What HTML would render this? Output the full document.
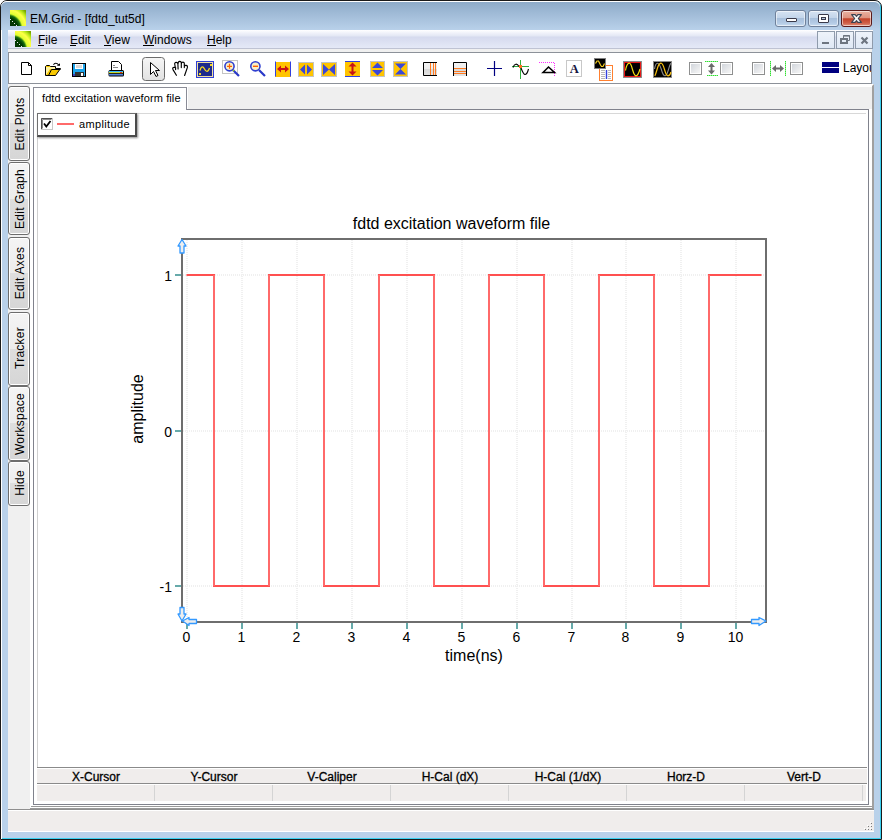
<!DOCTYPE html>
<html><head><meta charset="utf-8">
<style>
*{margin:0;padding:0;box-sizing:border-box}
html,body{width:882px;height:840px;overflow:hidden;background:#fff}
body{position:relative;font-family:"Liberation Sans",sans-serif;color:#000}
.a{position:absolute}
#win{left:0;top:0;width:882px;height:840px;background:#b9d1ea;border:1px solid #1a1a1a;border-radius:7px 7px 0 0;box-shadow:inset 1px 0 0 #fff,inset -1px -1px 0 #3ad0f0}
#title{left:1px;top:1px;width:879px;height:29px;border-top:1px solid #fff;background:linear-gradient(#8eabc9,#b9d1ea);border-radius:6px 6px 0 0}
#ttext{left:30px;top:12px;font-size:12px;line-height:14px;color:#000;white-space:nowrap}
#menubar{left:8px;top:30px;width:865px;height:19px;background:linear-gradient(#fff 0px,#f0f2fa 3px,#e3e7f4 6px,#d5daee 7px,#e5e9f7 18px);border-bottom:1px solid #bfc3d3}
.mi{top:33px;font-size:12px;line-height:14px;white-space:nowrap}
#client{left:8px;top:49px;width:864px;height:783px;background:#f0f0f0}
#toolbar{left:8px;top:52px;width:864px;height:32px;background:#fff;border:1px solid #8c9199}
.vt{left:8px;width:22px;border:1px solid #6d6d6d;border-radius:3px;box-shadow:inset 0 0 0 1px #fff;background:linear-gradient(#f4f4f4 0%,#ececec 50%,#dedede 50%,#d6d6d6 100%)}
.vtt{position:absolute;left:50%;top:50%;margin-left:1px;letter-spacing:0.25px;transform:translate(-50%,-50%) rotate(-90deg);font-size:12px;line-height:14px;white-space:nowrap;color:#000}
#doctab{left:33px;top:87px;width:154px;height:23px;background:#fff;border:1px solid #8a8c96;border-bottom:none}
#frame{left:33px;top:109px;width:836px;height:696px;background:#fff;border:1px solid #80828c}
#plotarea{left:37px;top:113px;width:829px;height:654px;border-top:1px solid #d8d8d8;border-left:1px solid #d0d0d0;background:#fff}
#status{left:8px;top:809px;width:866px;height:23px;background:#f0edec;border-top:1px solid #8f8f8f;box-shadow:inset 0 1px 0 #fff;border-bottom:1px solid #fff}
#mdi{left:30px;top:84px;width:844px;height:725px;border-top:2px solid transparent;background-clip:padding-box;background:#fff;border-right:2px solid #a0a0a0;border-bottom:1px solid #999}
#tabstrip{left:188px;top:87px;width:684px;height:22px;background:#efefef}
#mdiline{left:31px;top:806px;width:841px;height:1px;background:#9a9a9a}

#legend{left:37px;top:113px;width:100px;height:24px;background:#fff;border-top:1px solid #707070;border-left:1px solid #707070;border-right:2px solid #4a4a4a;border-bottom:2px solid #4a4a4a;box-shadow:1px 1px 2px rgba(0,0,0,.45)}
#thead{left:37px;top:767px;width:830px;height:18px;background:#f0edec;border-top:1px solid #8a8a8a;border-bottom:1px solid #fff;box-shadow:inset 0 1px 0 #fff,inset 0 -1px 0 #fff}
#thline{left:37px;top:783px;width:830px;height:1px;background:#8a8a8a}
#trow{left:37px;top:785px;width:829px;height:16px;background:#f0edec}
.hdr{top:770px;font-size:12px;line-height:14px;letter-spacing:0px;font-weight:normal;-webkit-text-stroke:0.3px #000;white-space:nowrap}


.tbtn{top:10px;width:31px;height:17px;border:1px solid #6f819b;border-radius:3px;box-shadow:inset 0 0 0 1px rgba(255,255,255,.55);background:linear-gradient(#d6e3f2 0%,#c3d5ea 45%,#a8c0dc 50%,#b4cbe5 80%,#c8dbef 100%)}
.cls{border-color:#5a1a1a;background:linear-gradient(#eab2a2 0%,#de9380 45%,#c3432a 52%,#cf6048 80%,#e0937c 100%)}
.mbtn{top:31px;width:18px;height:18px;border:1px solid #8f9bab;background:linear-gradient(#eef3fa,#dfe8f5)}
u{text-decoration:none;border-bottom:1px solid #000}
</style></head><body>
<div id="win" class="a"></div>
<div id="title" class="a"></div>
<div id="ttext" class="a">EM.Grid - [fdtd_tut5d]</div>
<div id="menubar" class="a"></div>
<div class="a mi" style="left:38px">File</div>
<div class="a mi" style="left:70px">Edit</div>
<div class="a mi" style="left:104px">View</div>
<div class="a mi" style="left:143px">Windows</div>
<div class="a mi" style="left:207px">Help</div>
<div class="a" style="left:38px;top:45px;width:6px;height:1px;background:#000"></div>
<div class="a" style="left:70px;top:45px;width:6px;height:1px;background:#000"></div>
<div class="a" style="left:104px;top:45px;width:7px;height:1px;background:#000"></div>
<div class="a" style="left:143px;top:45px;width:11px;height:1px;background:#000"></div>
<div class="a" style="left:207px;top:45px;width:9px;height:1px;background:#000"></div>


<svg width="0" height="0" style="position:absolute"><defs>
<radialGradient id="ico" cx="-2" cy="18" r="24" gradientUnits="userSpaceOnUse">
<stop offset="0" stop-color="#0a300a"/><stop offset="0.42" stop-color="#003c00"/><stop offset="0.52" stop-color="#1a7010"/>
<stop offset="0.6" stop-color="#e0ff30"/><stop offset="0.76" stop-color="#ffff48"/><stop offset="0.88" stop-color="#b8e818"/><stop offset="1" stop-color="#78a800"/>
</radialGradient></defs></svg>
<svg class="a" style="left:10px;top:10px" width="16" height="16"><rect width="16" height="16" fill="url(#ico)"/><path d="M0,9 L1,10 M2,11 L3,12 M4,13 L5,14 M6,15 L7,16" stroke="#e8e8e8" stroke-width="1"/></svg>
<svg class="a" style="left:15px;top:31px" width="16" height="16"><rect width="16" height="16" fill="url(#ico)"/><path d="M0,9 L1,10 M2,11 L3,12 M4,13 L5,14 M6,15 L7,16" stroke="#e8e8e8" stroke-width="1"/></svg>
<div class="a tbtn" style="left:775px"><div class="a" style="left:10px;top:7px;width:11px;height:4px;background:#fff;border:1px solid #3a3a4a;border-radius:1px"></div></div>
<div class="a tbtn" style="left:808px"><div class="a" style="left:9px;top:3px;width:11px;height:9px;background:#fff;border:1px solid #3a3a4a;border-radius:1px"><div class="a" style="left:2px;top:2px;width:5px;height:3px;background:#b8c8dc;border:1px solid #3a3a4a"></div></div></div>
<div class="a tbtn cls" style="left:841px"><svg class="a" style="left:0;top:0" width="31" height="17"><path d="M9.6,3.6 H13.2 L14.5,5.4 L15.8,3.6 H19.4 L16.3,7.5 L19.4,11.4 H15.8 L14.5,9.6 L13.2,11.4 H9.6 L12.7,7.5 Z" fill="#f6f6f6" stroke="#3c4250" stroke-width="1.1" stroke-linejoin="round"/></svg></div>
<div class="a mbtn" style="left:817px"><div class="a" style="left:4px;top:10px;width:7px;height:2px;background:#6d7580"></div></div>
<div class="a mbtn" style="left:836px"><svg class="a" style="left:0;top:0" width="18" height="18"><path d="M6.5,6.5 V3.5 H12.5 V8.5 H10.5" fill="none" stroke="#6d7580" stroke-width="1"/><path d="M6.5,3.8 H12.5" stroke="#6d7580" stroke-width="1.6"/><rect x="4" y="7" width="6" height="4" fill="none" stroke="#6d7580" stroke-width="2"/></svg></div>
<div class="a mbtn" style="left:855px"><svg class="a" style="left:0;top:0" width="18" height="18"><path d="M5.5,5.5 L11.5,11.5 M11.5,5.5 L5.5,11.5" stroke="#6d7580" stroke-width="2.2"/></svg></div>
<div id="client" class="a"></div>
<div id="toolbar" class="a"></div>
<!--TB-->
<svg class="a" style="left:0;top:0" width="882" height="90" viewBox="0 0 882 90">
<defs>
<linearGradient id="selbtn" x1="0" y1="0" x2="0" y2="1"><stop offset="0" stop-color="#f6f6f6"/><stop offset="1" stop-color="#e2e2e2"/></linearGradient>
<linearGradient id="chk" x1="0" y1="0" x2="1" y2="1"><stop offset="0" stop-color="#d2d6dc"/><stop offset="1" stop-color="#f6f6f6"/></linearGradient>
<linearGradient id="boxg" x1="0" y1="0" x2="0" y2="1"><stop offset="0" stop-color="#f4f4f4"/><stop offset="0.5" stop-color="#ececec"/><stop offset="0.5" stop-color="#d8d8d8"/><stop offset="1" stop-color="#e4e4e4"/></linearGradient>
</defs>
<!-- new doc -->
<path d="M21.5,62.5 H28.5 L31.5,65.5 V74.5 H21.5 Z" fill="#fff" stroke="#000" stroke-width="1"/>
<path d="M28.5,62.5 V65.5 H31.5" fill="none" stroke="#000" stroke-width="1"/>
<!-- open folder -->
<path d="M45.5,75.5 V66.5 L46.5,65.5 H49.5 L50.5,66.5 H55.5 V68.5 H60.5 L55.5,75.5 Z" fill="#f8c800" stroke="#000" stroke-width="1"/>
<path d="M46,67 H55 V69 H50 L46,75 Z" fill="#fff3a0"/>
<path d="M48.5,75.5 L51.5,69.5 H60.5" fill="none" stroke="#000" stroke-width="1"/>
<path d="M53.5,64.8 C54.5,62.8 56.8,62.6 58.6,64.8" fill="none" stroke="#000" stroke-width="1.1"/>
<path d="M56.8,65.8 H60 V63.2 Z" fill="#000"/>
<!-- save -->
<rect x="72.5" y="63.5" width="13" height="13" fill="#1ca4ec" stroke="#000" stroke-width="1"/>
<rect x="75" y="64" width="8" height="5" fill="#fff"/>
<rect x="76" y="65" width="6" height="3" fill="#d8d8d8"/>
<rect x="75" y="72" width="9" height="4" fill="#333"/>
<rect x="81" y="73" width="2" height="3" fill="#fff"/>
<rect x="73" y="74" width="2" height="2" fill="#4040c0"/>
<!-- printer -->
<path d="M111.5,61.5 H118.5 L121.5,64.5 V70.5 H111.5 Z" fill="#fff" stroke="#000" stroke-width="1"/>
<path d="M113,65.5 H115 M113,67.5 H118" stroke="#888" stroke-width="1"/>
<rect x="108.5" y="70" width="15.5" height="6.5" rx="1.5" fill="#000"/>
<rect x="109" y="71" width="14" height="1" fill="#30b8ff"/>
<rect x="109" y="72" width="14" height="1.2" fill="#c8d830"/>
<rect x="120" y="72" width="2" height="1.2" fill="#e03020"/>
<rect x="109" y="74" width="14" height="1.5" fill="#5080e0"/>
<!-- selected pointer button -->
<rect x="142.5" y="57.5" width="22" height="23" rx="3" fill="url(#selbtn)" stroke="#6b6b6b" stroke-width="1"/>
<path d="M150.5,62.5 L150.5,74.5 L153.5,71.5 L156,76.5 L158,75.5 L155.5,70.5 L159.5,70.5 Z" fill="#fff" stroke="#000" stroke-width="1" stroke-linejoin="miter"/>
<!-- hand -->
<path d="M176.4,75.3 L173,69.6 C172.3,68.2 173,67.2 174.2,67.2 L175.6,67.6 L175.6,69.6 M175.5,68.5 L174.7,64 C174.4,62 177.6,61.8 177.9,63.8 L178.1,68.9 M178,64 C178,60.6 181.4,60.6 181.3,63.2 L181.3,67.6 M181.3,64 C181.3,61.6 184.4,61.6 184.3,63.6 L184.3,67.6 M184.3,66.2 C185,64.8 187.8,65.2 187.5,67.2 L184.6,75.5" fill="none" stroke="#000" stroke-width="1.15" stroke-linecap="round"/>
<!-- blue box -->
<rect x="196.5" y="61.5" width="17" height="16" fill="#1e2a8c" stroke="#3040d8" stroke-width="1"/>
<rect x="197.5" y="62.5" width="15" height="14" fill="none" stroke="#f0e0a0" stroke-width="1"/>
<path d="M200,70.5 C201,66 203,66 204.5,69 C206,72 208,72.5 209.5,68" fill="none" stroke="#f8d820" stroke-width="1.3"/>
<rect x="199" y="73" width="2" height="2" fill="#f8d820"/>
<rect x="210" y="64" width="2" height="2" fill="#f8d820"/>
<!-- zoom + -->
<rect x="222.5" y="60.5" width="15" height="13" fill="none" stroke="#c4c4c4" stroke-width="1"/>
<line x1="233" y1="70" x2="239" y2="76" stroke="#2838c8" stroke-width="2.2"/>
<line x1="233" y1="70" x2="234" y2="71" stroke="#a0d020" stroke-width="2"/>
<circle cx="229.5" cy="66.3" r="4.6" fill="#f8f0c8" stroke="#3040d0" stroke-width="1.6"/>
<path d="M229.5,63.8 V68.8 M227,66.3 H232" stroke="#ff6000" stroke-width="1.2"/>
<!-- zoom - -->
<line x1="259" y1="70" x2="265" y2="76" stroke="#2838c8" stroke-width="2.2"/>
<circle cx="255.4" cy="66.3" r="4.6" fill="#f8f0c8" stroke="#3040d0" stroke-width="1.6"/>
<path d="M253,66.3 H258" stroke="#ff6000" stroke-width="1.4"/>
<!-- yellow icons -->
<rect x="275" y="62" width="16" height="15" fill="#ffc400"/>
<path d="M275.5,61.5 V76.5 M290.5,61.5 V76.5" stroke="#3040e0" stroke-width="1"/>
<path d="M277,69 L281,65.5 V68 H285 V65.5 L289,69 L285,72.5 V70 H281 V72.5 Z" fill="#c81414"/>
<rect x="298.5" y="62.5" width="15" height="14" fill="#ffc400" stroke="#c4c4c4" stroke-width="1"/>
<path d="M300,69.5 L305,64.5 V74.5 Z M312,69.5 L307,64.5 V74.5 Z" fill="#3a48d8"/>
<rect x="321.5" y="62.5" width="15" height="14" fill="#ffc400" stroke="#c4c4c4" stroke-width="1"/>
<path d="M323,64 L329,69.5 L323,75 Z M335,64 L329,69.5 L335,75 Z" fill="#3a48d8"/>
<rect x="345" y="61" width="15" height="16" fill="#ffc400"/>
<path d="M345,61.5 H360 M345,76.5 H360" stroke="#3040e0" stroke-width="1"/>
<path d="M352.5,62.5 L356.5,66.5 H353.5 V71.5 H356.5 L352.5,75.5 L348.5,71.5 H351.5 V66.5 H348.5 Z" fill="#c81414"/>
<rect x="370.5" y="61.5" width="14" height="15" fill="#ffc400" stroke="#c4c4c4" stroke-width="1"/>
<path d="M372,68 L377.5,62.5 L383,68 Z M372,70 L377.5,75.5 L383,70 Z" fill="#3a48d8"/>
<rect x="393.5" y="61.5" width="14" height="15" fill="#ffc400" stroke="#c4c4c4" stroke-width="1"/>
<path d="M395,63.5 H406 L400.5,69 Z M395,74.5 H406 L400.5,69 Z" fill="#3a48d8"/>
<!-- box icons -->
<rect x="423" y="62" width="14" height="14" fill="url(#boxg)"/>
<path d="M437,62.5 H423.5 V75.5 H437" fill="none" stroke="#000" stroke-width="1"/>
<path d="M430.5,63 V75 M433.5,63 V75 M435.5,63 V75" stroke="#ff7a20" stroke-width="1"/>
<rect x="453" y="62" width="14" height="14" fill="url(#boxg)"/>
<path d="M453.5,76 V62.5 H466.5 V76" fill="none" stroke="#000" stroke-width="1"/>
<path d="M454,68.5 H466 M454,71.5 H466 M454,73.5 H466" stroke="#ff7a20" stroke-width="1"/>
<!-- blue cross -->
<path d="M487,68.5 H502 M494.5,61 V76" stroke="#000080" stroke-width="1.2"/>
<!-- green cross sine -->
<path d="M512,66.5 H529 M520.5,60 V79" stroke="#30b040" stroke-width="1"/>
<path d="M513,67.5 C514.5,63.5 517,63 519,66.5 M521,68 C522.5,72 523.5,74.5 525,74.5 C527,74.5 528,71 528.5,69" fill="none" stroke="#000" stroke-width="1.1"/>
<rect x="519" y="65" width="3" height="3" fill="#ff7020"/>
<!-- triangle -->
<path d="M539,62.5 H554.5 V77" fill="none" stroke="#ff30ff" stroke-width="1" stroke-dasharray="1,1"/>
<path d="M543,72.5 L548.5,67 L554.5,72.5 Z" fill="none" stroke="#000" stroke-width="1.6" stroke-linejoin="miter"/>
<!-- A box -->
<rect x="566.5" y="60.5" width="15" height="16" fill="#fff" stroke="#909090" stroke-width="1" stroke-dasharray="1,1"/>
<text x="574.2" y="73" text-anchor="middle" font-family="Liberation Serif" font-weight="bold" font-size="12.5" fill="#141440">A</text>
<!-- layered -->
<rect x="599.5" y="65.5" width="13" height="15" fill="#fff" stroke="#ff8030" stroke-width="1"/>
<path d="M601,70.5 H605 M601,72.5 H605 M601,74.5 H605 M601,76.5 H605 M601,78.5 H605 M608,70.5 H611 M608,72.5 H611 M608,74.5 H611 M608,76.5 H611 M608,78.5 H611" stroke="#b8b8b8" stroke-width="1"/>
<path d="M606.5,70 V79" stroke="#3040e0" stroke-width="1.4"/>
<rect x="594.5" y="58.5" width="11" height="10" fill="#000" stroke="#808080" stroke-width="1"/>
<path d="M595.5,63.5 L597,61 H598.5 L600.5,65 L601.5,66.5 H603 L604.5,63.5" fill="none" stroke="#f8d020" stroke-width="1.2"/>
<!-- red box -->
<rect x="623.5" y="61.5" width="18" height="16" fill="#000" stroke="#8a9090" stroke-width="1"/>
<rect x="624.5" y="62.5" width="16" height="14" fill="#000" stroke="#e81818" stroke-width="1.1"/>
<path d="M625.5,70.5 C626.5,65 628,63.2 629.3,63.2 C630.8,63.2 631.6,66 632.5,69.5 C633.5,73 634.6,75.8 636,75.8 C637.6,75.8 639,72.5 640,69" fill="none" stroke="#f8e010" stroke-width="1.2"/>
<!-- gray box -->
<rect x="653.5" y="61.5" width="18" height="16" fill="#000" stroke="#8a8a8a" stroke-width="1"/>
<path d="M654.5,69 C655.2,65 656.2,63.2 657.5,63.2 C659.5,63.2 660.5,67 661.5,70 C662.5,73.5 663.5,75.8 665,75.8 C666.5,75.8 667.5,73 668.5,69.5 C669.5,66 670.3,63.8 671,63.2" fill="none" stroke="#8c8c8c" stroke-width="1.1"/>
<path d="M654.8,75.8 C656,74 657,69 658,66.5 C659,64 660,63.2 661,63.2 C662.5,63.2 663.5,66 664.5,69.5 C665.5,73 666.5,75.8 668,75.8 C669.5,75.8 670.5,74 671,72" fill="none" stroke="#f8c010" stroke-width="1.2"/>
<!-- checkboxes -->
<g>
<rect x="689.5" y="62.5" width="12" height="12" fill="#fff" stroke="#8e8f8f" stroke-width="1"/>
<rect x="691" y="64" width="9" height="9" fill="url(#chk)"/>
<rect x="720.5" y="62.5" width="12" height="12" fill="#fff" stroke="#8e8f8f" stroke-width="1"/>
<rect x="722" y="64" width="9" height="9" fill="url(#chk)"/>
<rect x="752.5" y="62.5" width="12" height="12" fill="#fff" stroke="#8e8f8f" stroke-width="1"/>
<rect x="754" y="64" width="9" height="9" fill="url(#chk)"/>
<rect x="790.5" y="62.5" width="12" height="12" fill="#fff" stroke="#8e8f8f" stroke-width="1"/>
<rect x="792" y="64" width="9" height="9" fill="url(#chk)"/>
</g>
<path d="M705,61.5 H718 M707,75.5 H718" stroke="#30e030" stroke-width="1" stroke-dasharray="1.5,0.5"/>
<path d="M711.5,63 L715,67 H712.5 V70.5 H715 L711.5,74.5 L708,70.5 H710.5 V67 H708 Z" fill="#6a6a6a"/>
<path d="M770.5,61 V76 M785.5,61 V76" stroke="#30e030" stroke-width="1" stroke-dasharray="1.5,0.5"/>
<path d="M772,68.5 L776,65 V67.5 H780 V65 L784,68.5 L780,72 V69.5 H776 V72 Z" fill="#6a6a6a"/>
<!-- blue bars -->
<rect x="822" y="62" width="17" height="5" fill="#000080"/>
<rect x="822" y="68" width="17" height="5" fill="#000080"/>
</svg>
<div class="a" style="left:843px;top:61px;width:28px;overflow:hidden;font-size:12px;line-height:14px;white-space:nowrap">Layout</div>

<!--/TB-->
<div class="a vt" style="top:86px;height:75px"><span class="vtt">Edit Plots</span></div>
<div class="a vt" style="top:162px;height:73px"><span class="vtt">Edit Graph</span></div>
<div class="a vt" style="top:237px;height:73px"><span class="vtt" style="margin-top:-1px">Edit Axes</span></div>
<div class="a vt" style="top:312px;height:74px"><span class="vtt" style="margin-top:-1.5px">Tracker</span></div>
<div class="a vt" style="top:386px;height:75px"><span class="vtt">Workspace</span></div>
<div class="a vt" style="top:461px;height:45px"><span class="vtt" style="margin-top:-1px">Hide</span></div>
<div id="mdi" class="a"></div>
<div id="tabstrip" class="a"></div>
<div id="mdiline" class="a"></div>
<div id="frame" class="a"></div>
<div id="doctab" class="a"></div>
<div id="plotarea" class="a"></div>
<div id="status" class="a"></div>
<div class="a" style="left:870px;top:822px;width:1px;height:1px;background:#fff"></div><div class="a" style="left:871px;top:823px;width:1px;height:1px;background:#7a7a7a"></div><div class="a" style="left:867px;top:825px;width:1px;height:1px;background:#fff"></div><div class="a" style="left:868px;top:826px;width:1px;height:1px;background:#7a7a7a"></div><div class="a" style="left:870px;top:825px;width:1px;height:1px;background:#fff"></div><div class="a" style="left:871px;top:826px;width:1px;height:1px;background:#7a7a7a"></div><div class="a" style="left:864px;top:828px;width:1px;height:1px;background:#fff"></div><div class="a" style="left:865px;top:829px;width:1px;height:1px;background:#7a7a7a"></div><div class="a" style="left:867px;top:828px;width:1px;height:1px;background:#fff"></div><div class="a" style="left:868px;top:829px;width:1px;height:1px;background:#7a7a7a"></div><div class="a" style="left:870px;top:828px;width:1px;height:1px;background:#fff"></div><div class="a" style="left:871px;top:829px;width:1px;height:1px;background:#7a7a7a"></div>

<div class="a" style="left:42px;top:92px;font-size:11px;line-height:13px;letter-spacing:0.1px;white-space:nowrap">fdtd excitation waveform file</div>
<div id="legend" class="a"></div>
<svg class="a" style="left:41px;top:118px" width="12" height="12"><rect x="0.5" y="0.5" width="11" height="11" fill="#fff" stroke="#c8c8c8"/><path d="M0.5,11 V0.5 H11" stroke="#505050" stroke-width="1" fill="none"/><path d="M1.5,10.5 V1.5 H10.5" stroke="#8a8a8a" stroke-width="1" fill="none"/><path d="M3,5.5 L5.3,8.5 L9.5,3" fill="none" stroke="#000" stroke-width="1.8"/></svg>
<div class="a" style="left:57px;top:123px;width:17px;height:2px;background:#ff6a6a"></div>
<div class="a" style="left:79px;top:118px;font-size:11px;line-height:13px;letter-spacing:0.35px;white-space:nowrap">amplitude</div>
<div id="thead" class="a"></div>
<div id="trow" class="a"></div>
<div id="thline" class="a"></div>
<div class="a hdr" style="left:37px;width:118px;text-align:center">X-Cursor</div>
<div class="a hdr" style="left:155px;width:118px;text-align:center">Y-Cursor</div>
<div class="a hdr" style="left:273px;width:118px;text-align:center">V-Caliper</div>
<div class="a hdr" style="left:391px;width:118px;text-align:center">H-Cal (dX)</div>
<div class="a hdr" style="left:509px;width:118px;text-align:center">H-Cal (1/dX)</div>
<div class="a hdr" style="left:627px;width:118px;text-align:center">Horz-D</div>
<div class="a hdr" style="left:745px;width:118px;text-align:center">Vert-D</div>
<div class="a" style="left:154px;top:785px;width:1px;height:16px;background:#d4d4d4"></div>
<div class="a" style="left:272px;top:785px;width:1px;height:16px;background:#d4d4d4"></div>
<div class="a" style="left:390px;top:785px;width:1px;height:16px;background:#d4d4d4"></div>
<div class="a" style="left:508px;top:785px;width:1px;height:16px;background:#d4d4d4"></div>
<div class="a" style="left:626px;top:785px;width:1px;height:16px;background:#d4d4d4"></div>
<div class="a" style="left:744px;top:785px;width:1px;height:16px;background:#d4d4d4"></div>
<div class="a" style="left:862px;top:785px;width:1px;height:16px;background:#d4d4d4"></div>
<!--PLOT-->
<svg class="a" style="left:0;top:0" width="882" height="840" viewBox="0 0 882 840">
<line x1="187" y1="240" x2="187" y2="620" stroke="#f0f0f0" stroke-width="2" stroke-dasharray="1,1"/>
<line x1="242" y1="240" x2="242" y2="620" stroke="#f0f0f0" stroke-width="2" stroke-dasharray="1,1"/>
<line x1="297" y1="240" x2="297" y2="620" stroke="#f0f0f0" stroke-width="2" stroke-dasharray="1,1"/>
<line x1="352" y1="240" x2="352" y2="620" stroke="#f0f0f0" stroke-width="2" stroke-dasharray="1,1"/>
<line x1="407" y1="240" x2="407" y2="620" stroke="#f0f0f0" stroke-width="2" stroke-dasharray="1,1"/>
<line x1="462" y1="240" x2="462" y2="620" stroke="#f0f0f0" stroke-width="2" stroke-dasharray="1,1"/>
<line x1="517" y1="240" x2="517" y2="620" stroke="#f0f0f0" stroke-width="2" stroke-dasharray="1,1"/>
<line x1="572" y1="240" x2="572" y2="620" stroke="#f0f0f0" stroke-width="2" stroke-dasharray="1,1"/>
<line x1="626" y1="240" x2="626" y2="620" stroke="#f0f0f0" stroke-width="2" stroke-dasharray="1,1"/>
<line x1="681" y1="240" x2="681" y2="620" stroke="#f0f0f0" stroke-width="2" stroke-dasharray="1,1"/>
<line x1="736" y1="240" x2="736" y2="620" stroke="#f0f0f0" stroke-width="2" stroke-dasharray="1,1"/>
<line x1="183" y1="275" x2="765" y2="275" stroke="#f0f0f0" stroke-width="2" stroke-dasharray="1,1"/>
<line x1="183" y1="431" x2="765" y2="431" stroke="#f0f0f0" stroke-width="2" stroke-dasharray="1,1"/>
<line x1="183" y1="586" x2="765" y2="586" stroke="#f0f0f0" stroke-width="2" stroke-dasharray="1,1"/>
<line x1="186.5" y1="275" x2="215" y2="275" stroke="#ff5050" stroke-width="2"/>
<line x1="213" y1="586" x2="270" y2="586" stroke="#ff5050" stroke-width="2"/>
<line x1="268" y1="275" x2="325" y2="275" stroke="#ff5050" stroke-width="2"/>
<line x1="323" y1="586" x2="380" y2="586" stroke="#ff5050" stroke-width="2"/>
<line x1="378" y1="275" x2="435" y2="275" stroke="#ff5050" stroke-width="2"/>
<line x1="433" y1="586" x2="490" y2="586" stroke="#ff5050" stroke-width="2"/>
<line x1="488" y1="275" x2="545" y2="275" stroke="#ff5050" stroke-width="2"/>
<line x1="543" y1="586" x2="600" y2="586" stroke="#ff5050" stroke-width="2"/>
<line x1="598" y1="275" x2="655" y2="275" stroke="#ff5050" stroke-width="2"/>
<line x1="653" y1="586" x2="710" y2="586" stroke="#ff5050" stroke-width="2"/>
<line x1="708" y1="275" x2="761.5" y2="275" stroke="#ff5050" stroke-width="2"/>
<line x1="214" y1="275" x2="214" y2="586" stroke="#ff6a6a" stroke-width="2"/>
<line x1="269" y1="275" x2="269" y2="586" stroke="#ff6a6a" stroke-width="2"/>
<line x1="324" y1="275" x2="324" y2="586" stroke="#ff6a6a" stroke-width="2"/>
<line x1="379" y1="275" x2="379" y2="586" stroke="#ff6a6a" stroke-width="2"/>
<line x1="434" y1="275" x2="434" y2="586" stroke="#ff6a6a" stroke-width="2"/>
<line x1="489" y1="275" x2="489" y2="586" stroke="#ff6a6a" stroke-width="2"/>
<line x1="544" y1="275" x2="544" y2="586" stroke="#ff6a6a" stroke-width="2"/>
<line x1="599" y1="275" x2="599" y2="586" stroke="#ff6a6a" stroke-width="2"/>
<line x1="654" y1="275" x2="654" y2="586" stroke="#ff6a6a" stroke-width="2"/>
<line x1="709" y1="275" x2="709" y2="586" stroke="#ff6a6a" stroke-width="2"/>
<path d="M182,239 H766 V622 H182 Z" fill="none" stroke="#6e6e6e" stroke-width="2"/>
<line x1="175" y1="275" x2="181" y2="275" stroke="#66aaaa" stroke-width="2"/>
<line x1="175" y1="431" x2="181" y2="431" stroke="#66aaaa" stroke-width="2"/>
<line x1="175" y1="586" x2="181" y2="586" stroke="#66aaaa" stroke-width="2"/>
<line x1="187" y1="623" x2="187" y2="629" stroke="#66aaaa" stroke-width="2"/>
<line x1="242" y1="623" x2="242" y2="629" stroke="#66aaaa" stroke-width="2"/>
<line x1="297" y1="623" x2="297" y2="629" stroke="#66aaaa" stroke-width="2"/>
<line x1="352" y1="623" x2="352" y2="629" stroke="#66aaaa" stroke-width="2"/>
<line x1="407" y1="623" x2="407" y2="629" stroke="#66aaaa" stroke-width="2"/>
<line x1="462" y1="623" x2="462" y2="629" stroke="#66aaaa" stroke-width="2"/>
<line x1="517" y1="623" x2="517" y2="629" stroke="#66aaaa" stroke-width="2"/>
<line x1="572" y1="623" x2="572" y2="629" stroke="#66aaaa" stroke-width="2"/>
<line x1="626" y1="623" x2="626" y2="629" stroke="#66aaaa" stroke-width="2"/>
<line x1="681" y1="623" x2="681" y2="629" stroke="#66aaaa" stroke-width="2"/>
<line x1="736" y1="623" x2="736" y2="629" stroke="#66aaaa" stroke-width="2"/>
<g font-family="Liberation Sans" font-size="14" fill="#000">
<text x="186.5" y="642" text-anchor="middle">0</text>
<text x="241.5" y="642" text-anchor="middle">1</text>
<text x="296.5" y="642" text-anchor="middle">2</text>
<text x="351.5" y="642" text-anchor="middle">3</text>
<text x="406.5" y="642" text-anchor="middle">4</text>
<text x="461.5" y="642" text-anchor="middle">5</text>
<text x="516.5" y="642" text-anchor="middle">6</text>
<text x="571.5" y="642" text-anchor="middle">7</text>
<text x="625.5" y="642" text-anchor="middle">8</text>
<text x="680.5" y="642" text-anchor="middle">9</text>
<text x="735.5" y="642" text-anchor="middle">10</text>
<text x="172" y="281" text-anchor="end">1</text>
<text x="172" y="437" text-anchor="end">0</text>
<text x="172" y="592" text-anchor="end">-1</text>
</g>
<text x="451.5" y="229" text-anchor="middle" font-family="Liberation Sans" font-size="16" fill="#000">fdtd excitation waveform file</text>
<text x="474" y="661" text-anchor="middle" font-family="Liberation Sans" font-size="16" fill="#000">time(ns)</text>
<text transform="translate(142.5,409) rotate(-90)" x="0" y="0" text-anchor="middle" font-family="Liberation Sans" font-size="16" fill="#000">amplitude</text>
<g fill="#eeeeee" stroke="#3399ff" stroke-width="1.3" stroke-linejoin="round">
<path d="M182,239.5 L186,246 L184,246 L184,253 L180,253 L180,246 L178,246 Z"/>
<path d="M182,621 L178,614 L180,614 L180,607.5 L184,607.5 L184,614 L186,614 Z"/>
<path d="M182.5,621 L189,617.5 L189,619.5 L196.5,619.5 L196.5,623.5 L189,623.5 L189,625.5 Z"/>
<path d="M766,621 L759,617.5 L759,619.5 L751.5,619.5 L751.5,623.5 L759,623.5 L759,625.5 Z"/>
</g>
</svg>
<!--/PLOT-->
</body></html>
